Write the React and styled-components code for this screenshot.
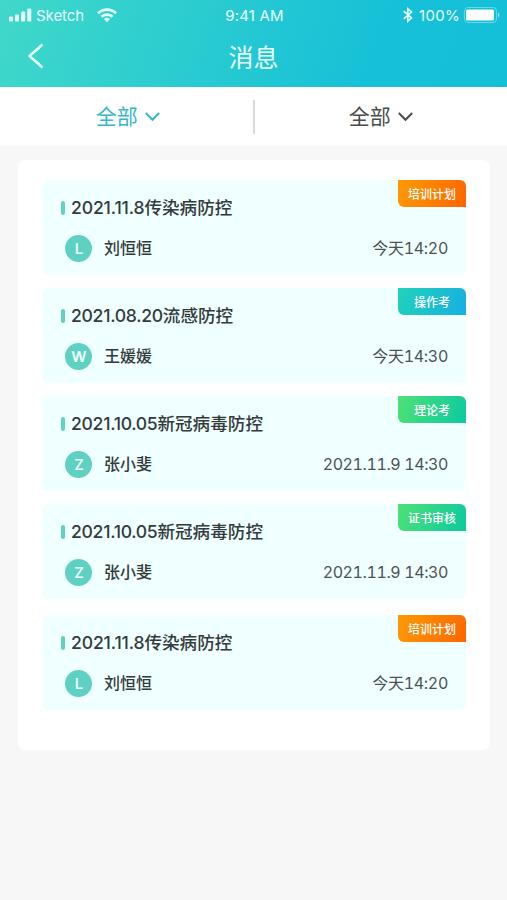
import React from 'react';
import styled, { createGlobalStyle } from 'styled-components';

const GlobalStyle = createGlobalStyle`
  * { box-sizing: border-box; }
  body {
    margin: 0;
    background: #f7f7f7;
    font-family: Inter, "Noto Sans CJK SC", sans-serif;
    color: #3c4444;
  }
`;

const Screen = styled.div`
  width: 507px;
  height: 900px;
  overflow: hidden;
  background: #f7f7f7;
`;

const Header = styled.header`
  height: 87px;
  color: #e9ffff;
  background: linear-gradient(110deg, #40d8c9 0%, #16c0d8 74%, #14bfd8 100%);
`;

const StatusBar = styled.div`
  display: grid;
  grid-template-columns: 1fr auto 1fr;
  align-items: center;
  height: 32px;
  padding: 0 7px 0 9px;
  font-size: 15px;
  line-height: 32px;
`;

const Carrier = styled.div`
  display: flex;
  align-items: center;
  height: 32px;
  svg { margin-top: -3px; }
  span { margin: 0 13px 0 4px; letter-spacing: -0.05px; }
`;

const Clock = styled.div`
  height: 32px;
  letter-spacing: 0.15px;
`;

const Power = styled.div`
  display: flex;
  justify-content: flex-end;
  align-items: center;
  height: 32px;
  svg { margin-top: -2px; }
  span { margin: 0 4px 0 6px; letter-spacing: 0.3px; }
`;

const TitleBar = styled.div`
  display: grid;
  grid-template-columns: 60px 1fr 60px;
  align-items: center;
  height: 48px;
  svg { margin-left: 27px; margin-top: -3px; display: block; }
`;

const PageTitle = styled.h1`
  margin: 0;
  padding-top: 2px;
  text-align: center;
  font-size: 25px;
  font-weight: 400;
  line-height: 48px;
`;

const Filters = styled.nav`
  display: flex;
  align-items: center;
  height: 59px;
  background: #fff;
`;

const Filter = styled.button`
  flex: none;
  width: 252.5px;
  display: flex;
  justify-content: center;
  align-items: center;
  gap: 7px;
  height: 59px;
  padding: 0 0 0 ${(p) => (p.$active ? 3 : 0)}px;
  border: 0;
  background: none;
  font: 400 21px/59px Inter, "Noto Sans CJK SC", sans-serif;
  color: ${(p) => (p.$active ? '#34b7c9' : '#4b4b4b')};
`;

const Divider = styled.div`
  width: 2px;
  height: 34px;
  background: #d9d9d9;
`;

const Panel = styled.main`
  width: 472px;
  height: 590px;
  margin: 14px 0 0 18px;
  padding: 20px 24px 0;
  border-radius: 7px;
  background: #fff;
`;

const Card = styled.article`
  position: relative;
  height: 95px;
  margin-bottom: ${(p) => p.$gap}px;
  padding: 18px 18px 0;
  border-radius: 6px;
  background: #f0ffff;
`;

const Heading = styled.h2`
  display: flex;
  align-items: center;
  height: 20px;
  margin: 0;
  font-size: 17.6px;
  font-weight: 500;
  line-height: 20px;
  white-space: nowrap;
  color: #343b3c;
  &::before {
    content: '';
    width: 4px;
    height: 14px;
    margin: 0 6px 1px 1px;
    border-radius: 2px;
    background: #5fd3c0;
  }
`;

const HeadingDate = styled.span`
  letter-spacing: ${(p) => p.$tracking}px;
`;

const Detail = styled.div`
  display: flex;
  align-items: center;
  height: 28px;
  margin-top: 16px;
  padding-left: 5px;
`;

const Avatar = styled.span`
  width: 27px;
  height: 27px;
  padding-left: 1px;
  border-radius: 50%;
  background: #5fd1c3;
  color: #effffb;
  font-size: 15px;
  font-weight: ${(p) => (p.$bold ? 600 : 500)};
  line-height: 27px;
  text-align: center;
`;

const Name = styled.span`
  margin-left: 12px;
  font-size: 16px;
  font-weight: 500;
  line-height: 28px;
  color: #343b3c;
`;

const Time = styled.time`
  margin-left: auto;
  font-size: 16px;
  line-height: 28px;
  letter-spacing: ${(p) => (p.$long ? -0.4 : -0.3)}px;
  font-variant-numeric: tabular-nums;
  color: #4c5354;
`;

const tagColors = {
  plan: '#fb9b05, #ff6500',
  practice: '#21d2b9, #16b0e2',
  exam: '#4fe176, #0bcaa0',
};

const Tag = styled.span`
  position: absolute;
  top: 0;
  right: 0;
  width: 68px;
  height: 27px;
  border-radius: 0 6px 0 6px;
  background: linear-gradient(110deg, ${(p) => tagColors[p.$kind]});
  color: #fff;
  font-size: 12px;
  font-weight: 500;
  line-height: 30px;
  text-align: center;
`;

const messages = [
  { date: '2021.11.8', title: '传染病防控', initial: 'L', name: '刘恒恒', time: '今天14:20', tag: '培训计划', kind: 'plan', gap: 13 },
  { date: '2021.08.20', title: '流感防控', initial: 'W', name: '王媛媛', time: '今天14:30', tag: '操作考', kind: 'practice', gap: 13 },
  { date: '2021.10.05', title: '新冠病毒防控', initial: 'Z', name: '张小斐', time: '2021.11.9 14:30', tag: '理论考', kind: 'exam', gap: 13 },
  { date: '2021.10.05', title: '新冠病毒防控', initial: 'Z', name: '张小斐', time: '2021.11.9 14:30', tag: '证书审核', kind: 'exam', gap: 16 },
  { date: '2021.11.8', title: '传染病防控', initial: 'L', name: '刘恒恒', time: '今天14:20', tag: '培训计划', kind: 'plan', gap: 0 },
];

const SignalIcon = () => (
  <svg width="23" height="14" viewBox="0 0 23 14" fill="currentColor">
    <rect x="0" y="8.5" width="4" height="5" rx="1.3" />
    <rect x="6" y="6.5" width="4" height="7" rx="1.3" />
    <rect x="12.2" y="3.5" width="4" height="10" rx="1.3" />
    <rect x="18.3" y="0.5" width="4" height="13" rx="1.3" />
  </svg>
);

const WifiIcon = () => (
  <svg width="20" height="14" viewBox="0 0 20 14" fill="none" stroke="currentColor" strokeWidth="2.7">
    <path d="M1 5.3C6.2 .5 13.8 .5 19 5.3" />
    <path d="M4.4 8.8C7.6 5.8 12.4 5.8 15.6 8.8" />
    <path d="M6.8 11C8.8 9.3 11.2 9.3 13.2 11L10 14Z" fill="currentColor" stroke="none" />
  </svg>
);

const BluetoothIcon = () => (
  <svg width="10" height="16" viewBox="0 0 10 16" fill="none" stroke="currentColor" strokeWidth="1.6">
    <path d="M.8 4.2L8.5 11L4.8 14.2V1.8L8.5 5L.8 11.8" />
  </svg>
);

const BatteryIcon = () => (
  <svg width="36" height="16" viewBox="0 0 36 16">
    <rect x=".5" y=".5" width="32" height="15" rx="3.5" fill="none" stroke="#8ae2ec" strokeOpacity=".7" />
    <rect x="2" y="2.5" width="28" height="11" rx="1.5" fill="#fff" />
    <path d="M34 5.5C36 6.5 36 9.5 34 10.5Z" fill="#8ae2ec" />
  </svg>
);

const BackIcon = () => (
  <svg width="17" height="26" viewBox="0 0 17 26" fill="none" stroke="currentColor" strokeWidth="2.5">
    <path d="M15.5 1.5L2.5 13L15.5 24.5" />
  </svg>
);

const ChevronIcon = () => (
  <svg width="15" height="10" viewBox="0 0 15 10" fill="none" stroke="currentColor" strokeWidth="2">
    <path d="M.8 1L7.5 7.8L14.2 1" />
  </svg>
);

export default function App() {
  return (
    <Screen>
      <GlobalStyle />
      <Header>
        <StatusBar>
          <Carrier><SignalIcon /><span>Sketch</span><WifiIcon /></Carrier>
          <Clock>9:41 AM</Clock>
          <Power><BluetoothIcon /><span>100%</span><BatteryIcon /></Power>
        </StatusBar>
        <TitleBar>
          <BackIcon />
          <PageTitle>消息</PageTitle>
        </TitleBar>
      </Header>
      <Filters>
        <Filter $active>全部<ChevronIcon /></Filter>
        <Divider />
        <Filter>全部<ChevronIcon /></Filter>
      </Filters>
      <Panel>
        {messages.map((m, i) => (
          <Card key={i} $gap={m.gap}>
            <Heading><HeadingDate $tracking={m.date.length > 9 ? -0.3 : -0.15}>{m.date}</HeadingDate>{m.title}</Heading>
            <Detail>
              <Avatar $bold={m.initial === 'W'}>{m.initial}</Avatar>
              <Name>{m.name}</Name>
              <Time $long={m.time.length > 8}>{m.time}</Time>
            </Detail>
            <Tag $kind={m.kind}>{m.tag}</Tag>
          </Card>
        ))}
      </Panel>
    </Screen>
  );
}
